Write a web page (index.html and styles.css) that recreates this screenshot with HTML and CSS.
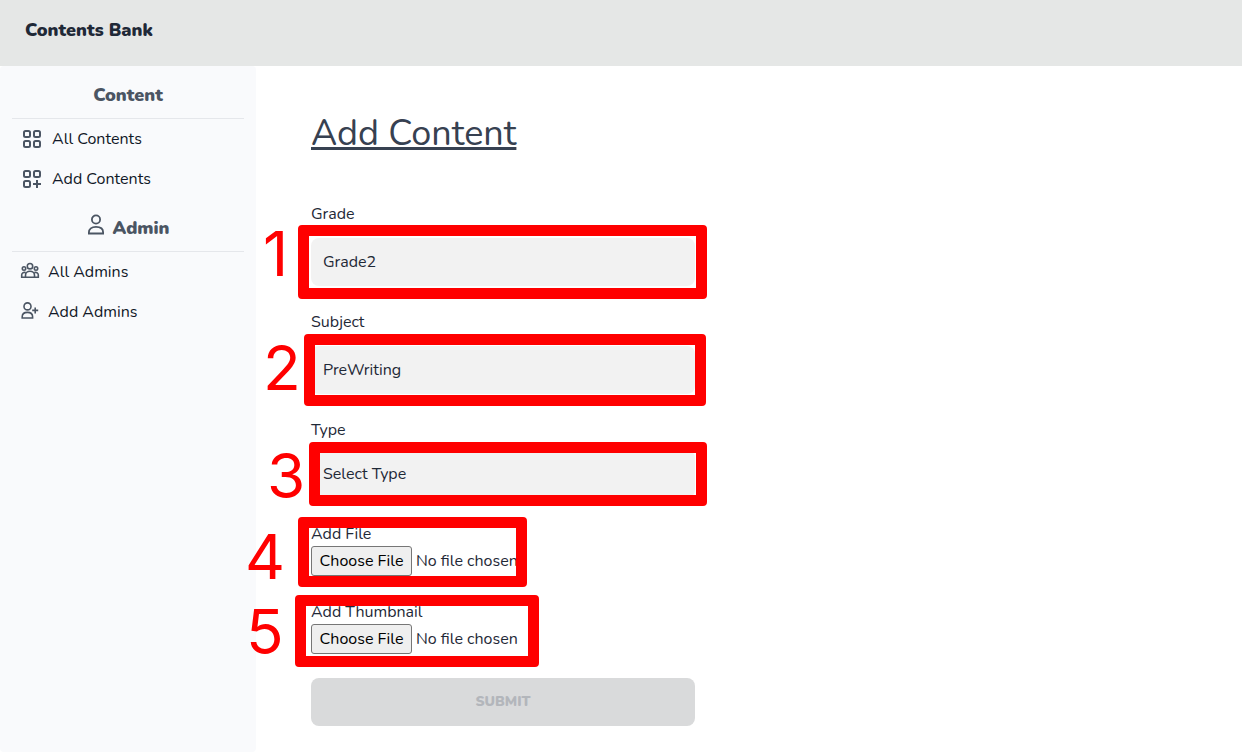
FILE: index.html
```html
<!DOCTYPE html>
<html lang="en">
<head>
<meta charset="utf-8">
<meta name="viewport" content="width=device-width, initial-scale=1">
<title>Contents Bank</title>
<link rel="stylesheet" href="styles.css">
</head>
<body>
<header class="topbar"><span class="brand">Contents Bank</span></header>
<div class="layout">
  <nav class="sidebar" aria-label="Main">
    <h2 class="group-title">Content</h2>
    <ul class="menu">
      <li><a class="menu-link" href="#all-contents">
        <svg class="icon icon-grid" viewBox="0 0 24 24" aria-hidden="true"><rect x="4" y="4" width="6" height="6" rx="1.5"/><rect x="14" y="4" width="6" height="6" rx="1.5"/><rect x="4" y="14" width="6" height="6" rx="1.5"/><rect x="14" y="14" width="6" height="6" rx="1.5"/></svg>
        All Contents</a></li>
      <li><a class="menu-link" href="#add-contents">
        <svg class="icon icon-grid" viewBox="0 0 24 24" aria-hidden="true"><rect x="4" y="4" width="6" height="6" rx="1.5"/><rect x="14" y="4" width="6" height="6" rx="1.5"/><rect x="4" y="14" width="6" height="6" rx="1.5"/><path d="M13 17h8M17 13v8"/></svg>
        Add Contents</a></li>
    </ul>
    <h2 class="group-title">
      <svg class="icon icon-user" viewBox="0 0 18 22" aria-hidden="true"><circle cx="10" cy="5.500" r="4.100"/><path d="M2.900 19.500v-1.200c0-3.200 2.600-5.400 7.100-5.400s7.100 2.200 7.100 5.400v1.200z"/></svg>
      Admin</h2>
    <ul class="menu">
      <li><a class="menu-link" href="#all-admins">
        <svg class="icon icon-people" viewBox="0 0 20 20" aria-hidden="true"><circle cx="10" cy="4.200" r="2.700"/><circle cx="4" cy="6.500" r="1.700"/><circle cx="16" cy="6.500" r="1.700"/><path d="M5.500 15.300v-2a4.500 4.100 0 0 1 9 0v2zM5.500 15.300H1.700v-2.400c0-1.800 1.600-2.800 3.900-2.400M14.500 15.300h3.800v-2.400c0-1.800-1.600-2.800-3.900-2.400"/></svg>
        All Admins</a></li>
      <li><a class="menu-link" href="#add-admins">
        <svg class="icon icon-people" viewBox="0 0 20 20" aria-hidden="true"><circle cx="7.500" cy="4.400" r="3.500"/><path d="M2.200 16v-1.200c0-2.700 2-4.400 5.200-4.400s5.200 1.700 5.200 4.400v1.200zM15.200 5.400v6M12.200 8.400h6"/></svg>
        Add Admins</a></li>
    </ul>
  </nav>
  <main class="content">
    <h1 class="title">Add Content</h1>
    <form class="form">
      <div class="field">
        <label for="grade">Grade</label>
        <select class="select" id="grade"><option>Grade2</option></select>
        <span class="frame frame-1"></span><span class="number number-1">1</span>
      </div>
      <div class="field">
        <label for="subject">Subject</label>
        <select class="select" id="subject"><option>PreWriting</option></select>
        <span class="frame frame-2"></span><span class="number number-2">2</span>
      </div>
      <div class="field field-tight">
        <label for="type">Type</label>
        <select class="select" id="type"><option>Select Type</option></select>
        <span class="frame frame-3"></span><span class="number number-3">3</span>
      </div>
      <div class="field field-file">
        <label for="file">Add File</label>
        <input class="file" id="file" type="file">
        <span class="frame frame-4"></span><span class="number number-4">4</span>
      </div>
      <div class="field field-file">
        <label for="thumbnail">Add Thumbnail</label>
        <input class="file" id="thumbnail" type="file">
        <span class="frame frame-5"></span><span class="number number-5">5</span>
      </div>
      <button class="submit" type="submit" disabled>SUBMIT</button>
    </form>
  </main>
</div>
</body>
</html>
```
FILE: styles.css
```css
* { box-sizing: border-box; }
body {
  margin: 0;
  min-height: 100vh;
  display: flex;
  flex-direction: column;
  background: #fff;
  color: #1f2937;
  font: 440 16px/24px Nunito, Lato, "Open Sans", sans-serif;
}
.topbar { padding: 16px 25px 22px; background: #e5e7e6; }
.brand { font-size: 18px; line-height: 28px; font-weight: 900; display: block; }
.layout { flex: 1; display: flex; }
.sidebar {
  flex: 0 0 256px;
  padding: 0 12px;
  background: #f9fafc;
  border-radius: 4px;
}
.group-title {
  display: flex;
  justify-content: center;
  gap: 8px;
  margin: 0;
  padding: 15px 0 9px;
  border-bottom: 1px solid #e5e7eb;
  color: #4b5563;
  font-size: 18px;
  line-height: 28px;
  font-weight: 900;
}
.menu { list-style: none; margin: 0; padding: 0; }
.menu-link {
  display: flex;
  align-items: center;
  gap: 8px;
  height: 40px;
  padding-left: 8px;
  color: #111827;
  text-decoration: none;
}
.icon { fill: none; stroke: #4b5563; flex: none; }
.icon-grid { width: 24px; height: 24px; stroke-width: 2; }
.icon-user { width: 18px; height: 22px; stroke-width: 1.8; }
.icon-people { width: 20px; height: 20px; stroke-width: 1.6; }
.content { flex: 1; padding: 48px 55px 26px; }
.title {
  margin: 0 0 48px;
  color: #374151;
  font-size: 36px;
  line-height: 40px;
  font-weight: 440;
  text-decoration: underline;
}
.form { max-width: 384px; display: flex; flex-direction: column; gap: 24px; }
.field { position: relative; display: flex; flex-direction: column; gap: 12px; }
.field-tight { gap: 8px; }
.field-file { gap: 0; }
.select {
  appearance: none;
  width: 100%;
  height: 48px;
  padding: 0 12px;
  border: 0;
  border-radius: 8px;
  background: #f2f2f2;
  color: inherit;
  font: inherit;
}
.file { height: 30px; width: 100%; color: inherit; font: inherit; }
.file::file-selector-button {
  height: 30px;
  min-width: 101px;
  padding: 1px 6px;
  border: 1px solid #767676;
  border-radius: 3px;
  background: #efefef;
  color: #000;
  font: inherit;
}
.submit {
  height: 48px;
  border: 0;
  border-radius: 8px;
  background: #d9dadb;
  color: #b3b6bb;
  font: inherit;
  font-size: 14px;
  font-weight: 900;
}
.frame {
  position: absolute;
  border: 11px solid #f00;
  border-radius: 4px;
  pointer-events: none;
}
.frame-1 { left: -13px; top: 23px; width: 409px; height: 74px; }
.frame-2 { left: -7px; top: 24px; width: 402px; height: 72px; }
.frame-3 { left: -2px; top: 24px; width: 398px; height: 64px; }
.frame-4 { left: -13px; top: -5px; width: 229px; height: 70px; }
.frame-5 { left: -16px; top: -5px; width: 244px; height: 72px; }
.number {
  position: absolute;
  color: #f00;
  font: 400 62px/45px Inter, sans-serif;
}
.number-1 { left: -48px; top: 29px; }
.number-2 { left: -48px; top: 35px; }
.number-3 { left: -44px; top: 35px; }
.number-4 { left: -66px; top: 12px; }
.number-5 { left: -65px; top: 9px; }
```
